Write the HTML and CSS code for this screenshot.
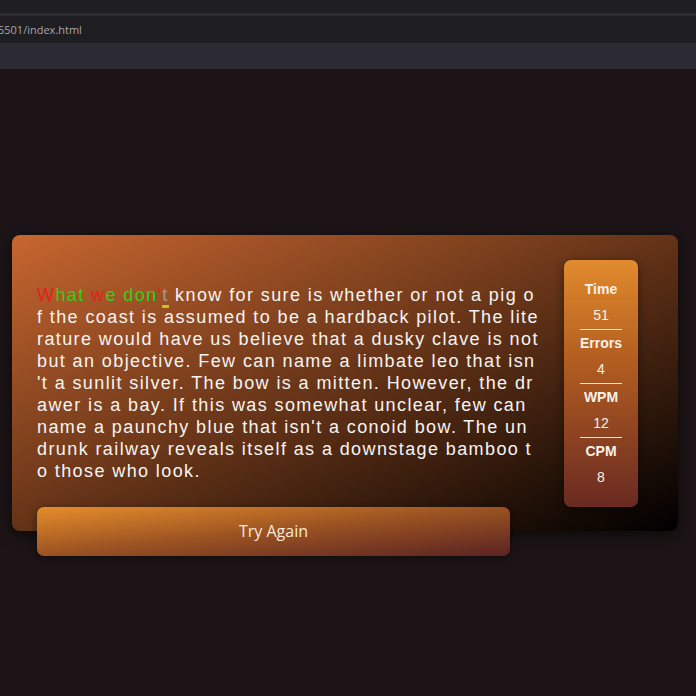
FILE: index.html
```html
<!DOCTYPE html>
<html>
<head>
<meta charset="utf-8">
<link rel="stylesheet" href="styles.css">
</head>
<body>
<div class="chrome">
  <div class="tabs"></div>
  <div class="sep"></div>
  <div class="urlbar"><span class="url">5501/index.html</span></div>
  <div class="toolbar"></div>
</div>
<main class="stage">
  <section class="card">
    <p class="passage"><span class="bad">W</span><span class="good">hat </span><span class="bad">w</span><span class="good">e don</span><span class="bad">'</span><span class="cur">t</span> know for sure is whether or not a pig o<br>f the coast is assumed to be a hardback pilot. The lite<br>rature would have us believe that a dusky clave is not<br>but an objective. Few can name a limbate leo that isn<br>'t a sunlit silver. The bow is a mitten. However, the dr<br>awer is a bay. If this was somewhat unclear, few can<br>name a paunchy blue that isn't a conoid bow. The un<br>drunk railway reveals itself as a downstage bamboo t<br>o those who look.</p>
    <aside class="stats">
      <div class="stat"><div class="label">Time</div><div class="value">51</div></div>
      <div class="stat"><div class="label">Errors</div><div class="value">4</div></div>
      <div class="stat"><div class="label">WPM</div><div class="value">12</div></div>
      <div class="stat"><div class="label">CPM</div><div class="value">8</div></div>
    </aside>
    <button class="retry">Try Again</button>
  </section>
</main>
</body>
</html>
```
FILE: styles.css
```css
* { box-sizing: border-box; }
html, body { margin: 0; padding: 0; }
body {
  background: #1c1416;
  font-family: "Liberation Sans", Arial, sans-serif;
  width: 696px;
  height: 696px;
  overflow: hidden;
  display: flex;
  flex-direction: column;
}
.chrome { flex: none; }
.tabs { height: 13px; background: #1f1e23; }
.sep { height: 3px; background: #2d2c31; }
.urlbar {
  height: 27px;
  background: #1e1d22;
  display: flex;
  align-items: center;
  overflow: hidden;
}
.url {
  margin-left: -2px;
  font-family: "Open Sans", "Noto Sans", sans-serif;
  font-size: 11px;
  color: #a7a7ab;
  white-space: nowrap;
}
.toolbar { height: 26px; background: #2c2b33; }
.stage {
  flex: 1;
  display: flex;
  align-items: center;
  padding-left: 12px;
}
.card {
  position: relative;
  width: 666px;
  display: flex;
  align-items: center;
  padding: 25px 40px 24px 25px;
  border-radius: 8px;
  background: linear-gradient(to bottom right, #c8662f 0%, #000 100%);
  box-shadow: 0 4px 14px rgba(0, 0, 0, 0.55);
}
.passage {
  width: 500px;
  flex: none;
  margin: 0 27px 0 0;
  font-family: "Liberation Sans", Arial, sans-serif;
  font-size: 18px;
  line-height: 22px;
  letter-spacing: 1.4px;
  color: #f6f4f2;
  white-space: nowrap;
}
.bad { color: #e0221c; }
.good { color: #2fd01a; }
.cur {
  color: #a89a8c;
  border-bottom: 3px solid #c9c21c;
}
.stats {
  width: 74px;
  flex: none;
  padding: 16px 16px;
  border-radius: 7px;
  background: linear-gradient(to bottom, #e28b2e 0%, #b35e20 40%, #6a2a22 100%);
  box-shadow: 0 2px 8px rgba(0, 0, 0, 0.45);
  color: #f7f1ea;
  text-align: center;
  font-size: 14px;
}
.stat {
  padding: 4px 0 5px;
  border-bottom: 1px solid #f3e6d8;
}
.stat:last-child { border-bottom: none; }
.label { font-weight: bold; line-height: 18px; }
.value { margin-top: 8px; line-height: 18px; }
.retry {
  position: absolute;
  left: 25px;
  top: 272px;
  width: 473px;
  height: 49px;
  border: none;
  border-radius: 7px;
  background: linear-gradient(to bottom right, #e68d2b 0%, #9a5222 50%, #5a2322 100%);
  color: #f8ead8;
  font-family: "Open Sans", "Noto Sans", sans-serif;
  font-size: 16px;
  box-shadow: 0 2px 8px rgba(0, 0, 0, 0.4);
}
```
